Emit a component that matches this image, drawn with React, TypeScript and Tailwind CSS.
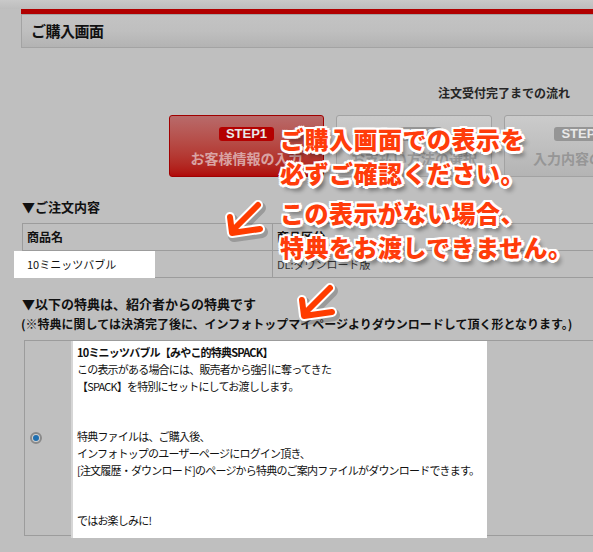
import React from "react";

const jp = "font-['Noto_Sans_CJK_JP','Noto_Sans',sans-serif]";

const Step = ({ no, label, active }: { no: string; label: string; active?: boolean }) => (
  <div
    className={
      "flex flex-col items-center shrink-0 h-[62px] rounded-[3px] border pt-[11px] " +
      (active
        ? "w-[155px] border-[#a00000] bg-gradient-to-b from-[#b86a6a] to-[#b00808]"
        : "w-[156px] border-[#a2a2a2] bg-gradient-to-b from-[#cbcbcb] to-[#b4b4b4]")
    }
  >
    <div
      className={
        "px-[7px] h-[14px] leading-[14px] rounded-[3px] text-[13px] font-bold text-[#e8e8e8] font-['Liberation_Sans',sans-serif] " +
        (active ? "bg-[#b40000]" : "bg-[#959595]")
      }
    >
      {no}
    </div>
    <div className={"mt-[8px] whitespace-nowrap text-[14px] font-bold leading-[18px] " + (active ? "text-[#d9a3a3]" : "text-[#969696]")}>
      {label}
    </div>
  </div>
);

const Arrow = ({ className }: { className: string }) => (
  <svg className={className} width="48" height="44" viewBox="0 0 48 44">
    <g fill="none" strokeLinecap="round" strokeLinejoin="round">
      <path d="M38 6 L12 32 M10 18 L12 34 L40 30" stroke="#555" strokeOpacity="0.35" strokeWidth="12" transform="translate(2 3)" />
      <path d="M38 6 L12 32 M10 18 L12 34 L40 30" stroke="#fff" strokeWidth="10" />
      <path d="M38 6 L12 32 M10 18 L12 34 L40 30" stroke="#ff3c00" strokeWidth="6" />
    </g>
  </svg>
);

export default function App() {
  const outline =
    "[text-shadow:2px_0_0_#fff,-2px_0_0_#fff,0_2px_0_#fff,0_-2px_0_#fff,2px_2px_0_#fff,-2px_-2px_0_#fff,2px_-2px_0_#fff,-2px_2px_0_#fff,3px_0_0_#fff,0_3px_0_#fff,4px_5px_4px_rgba(0,0,0,0.45)]";

  return (
    <div className={"relative w-[593px] h-[552px] overflow-hidden bg-[#bfbfbf] text-[#111] " + jp}>
      <div className="h-[9px] bg-gradient-to-b from-[#c9c9c9] to-[#bdbdbd]" />
      <div className="pl-[21px]">
        <div className="h-[5px] bg-[#b10000]" />
        <div className="h-[34px] border border-r-0 border-[#a3a3a3] bg-gradient-to-b from-[#c3c3c3] via-[#bfbfbf] to-[#b3b3b3] pl-[9px] flex items-center">
          <span className="text-[15px] font-bold tracking-[-0.5px]">ご購入画面</span>
        </div>
      </div>

      <div className="mt-[37px] pr-[23px] text-right text-[12px] font-bold leading-[16px] text-[#262626] whitespace-nowrap">注文受付完了までの流れ</div>

      <div className="mt-[14px] ml-[169px] flex gap-[12px]">
        <Step no="STEP1" label="お客様情報の入力" active />
        <Step no="STEP2" label="お支払い方法の選択" />
        <Step no="STEP3" label="入力内容の確認" />
      </div>

      <div className="mt-[22px] pl-[22px] text-[13px] font-bold leading-[16px]">▼ご注文内容</div>

      <div className="relative mt-[8px] ml-[22px] border border-r-0 border-[#9c9c9c] text-[12px]">
        <div className="flex h-[27px] border-b border-[#9c9c9c]">
          <div className="w-[250px] border-r border-[#9c9c9c] pl-[4px] flex items-center font-bold">商品名</div>
          <div className="pl-[4px] flex items-center font-bold">商品区分</div>
        </div>
        <div className="flex h-[26px]">
          <div className="w-[250px] border-r border-[#9c9c9c]" />
          <div className="pl-[4px] flex items-center text-[11px] text-[#333]">DL:ダウンロード版</div>
        </div>
        <div className="absolute left-[-9px] top-[27px] w-[141px] h-[27px] bg-white pl-[13px] flex items-center text-[11px]">10ミニッツバブル</div>
      </div>

      <div className="mt-[16px] pl-[22px] font-bold leading-[20px] whitespace-nowrap">
        <div className="text-[13px]">▼以下の特典は、紹介者からの特典です</div>
        <div className="text-[12px] -ml-[1px]">(※特典に関しては決済完了後に、インフォトップマイページよりダウンロードして頂く形となります。)</div>
      </div>

      <div className="mt-[6px] ml-[24px] h-[196px] flex border border-r-0 border-[#9c9c9c]">
        <div className="w-[46px] flex items-center pl-[5px]">
          <div className="w-[12px] h-[12px] rounded-full border-2 border-[#8a8a8a] bg-[#d0d0d0] flex items-center justify-center">
            <div className="w-[6px] h-[6px] rounded-full bg-[#1f6fb0]" />
          </div>
        </div>
        <div className="w-[416px] h-[197px] shrink-0 bg-white border-l-2 border-[#d6d6d6] pl-[4px] pt-[3px] text-[11px] leading-[16.8px] tracking-[-0.8px] text-[#111] whitespace-nowrap">
          <div className="font-bold">10ミニッツバブル【みやこ的特典SPACK】</div>
          <div>この表示がある場合には、販売者から強引に奪ってきた</div>
          <div>【SPACK】を特別にセットにしてお渡しします。</div>
          <div>&nbsp;</div>
          <div>&nbsp;</div>
          <div>特典ファイルは、ご購入後、</div>
          <div>インフォトップのユーザーページにログイン頂き、</div>
          <div>[注文履歴・ダウンロード]のページから特典のご案内ファイルがダウンロードできます。</div>
          <div>&nbsp;</div>
          <div>&nbsp;</div>
          <div>ではお楽しみに!</div>
        </div>
      </div>

      <Arrow className="absolute left-[220px] top-[199px]" />
      <Arrow className="absolute left-[292px] top-[282px]" />

      <div className={"absolute left-[280px] top-[122px] whitespace-nowrap text-[24px] font-black leading-[34px] tracking-[0.5px] text-[#ff3c0a] " + outline}>
        <div>ご購入画面での表示を</div>
        <div>必ずご確認ください。</div>
        <div className="mt-[6px]">この表示がない場合、</div>
        <div>特典をお渡しできません。</div>
      </div>
    </div>
  );
}
